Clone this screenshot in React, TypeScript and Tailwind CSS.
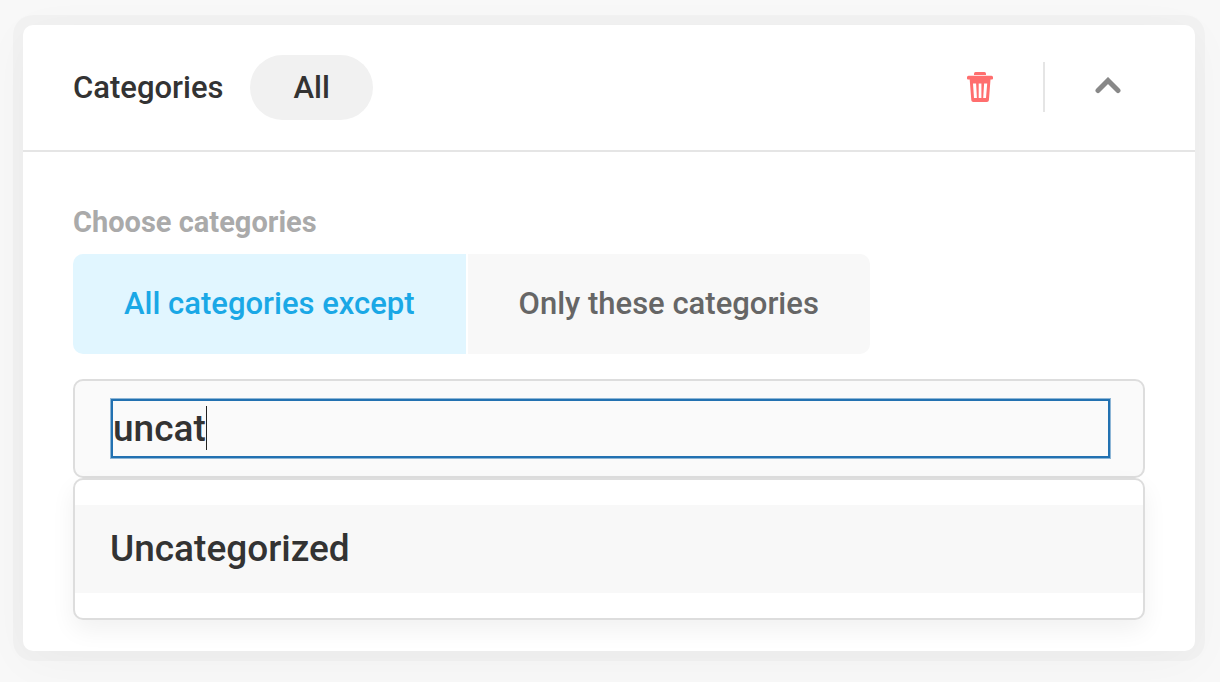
import { useState } from "react";

const MODES = [
  { id: "except", label: "All categories except" },
  { id: "only", label: "Only these categories" },
];

const CATEGORIES = ["Uncategorized"];

function TrashIcon() {
  return (
    <svg width="26" height="30" viewBox="0 0 26 30" fill="#ff6e6e" aria-hidden="true">
      <path d="M8.500 0h9a1.500 1.500 0 0 1 1.500 1.500V3H7V1.500A1.500 1.500 0 0 1 8.500 0Z" />
      <path
        fillRule="evenodd"
        d="M1.500 3.700h23a1.500 1.500 0 0 1 1.500 1.500V6.500a1 1 0 0 1-1 1h-1.500L21.900 28.200A2 2 0 0 1 19.900 30H6.300a2 2 0 0 1-2-1.800L2.700 7.500H1a1 1 0 0 1-1-1V5.200A1.500 1.500 0 0 1 1.500 3.700ZM6 11.500l1 14.500h2.900l-.8-14.500ZM11.700 11.500V26h2.700V11.500ZM17.100 11.500 16.200 26H19l1.200-14.500Z"
      />
    </svg>
  );
}

function ChevronUpIcon() {
  return (
    <svg width="26" height="17" viewBox="0 0 26 17" fill="none" aria-hidden="true">
      <path d="M3 13.500 13 3.500l10 10" stroke="#888888" strokeWidth="5" strokeLinecap="round" />
    </svg>
  );
}

export default function App() {
  const [mode, setMode] = useState("except");
  const [query, setQuery] = useState("uncat");
  const matches = CATEGORIES.filter((name) => name.toLowerCase().includes(query.toLowerCase()));

  return (
    <main className="min-h-screen bg-[#f8f8f8] pt-[25px] pr-[25px] pb-[31px] pl-[23px] font-['Roboto',sans-serif] font-medium text-[#333333]">
      <section className="rounded-[10px] bg-white shadow-[0_0_0_10px_rgba(0,0,0,0.024),0_10px_50px_rgba(0,0,0,0.035)]">
        <header className="flex items-start border-b-2 border-[#e5e5e5] px-[50px] py-[30px]">
          <div className="flex items-center gap-[27px] text-[31px] leading-[36px]">
            <h2>Categories</h2>
            <span className="flex h-[65px] items-center rounded-full bg-[#f1f1f1] px-[43px]">All</span>
          </div>
          <div className="ml-auto flex h-[64px] items-center">
            <button type="button" aria-label="Delete" className="px-[50px]">
              <TrashIcon />
            </button>
            <button
              type="button"
              aria-label="Collapse"
              className="flex h-[50px] items-center border-l-2 border-[#e5e5e5] pr-[24px] pb-[4px] pl-[50px]"
            >
              <ChevronUpIcon />
            </button>
          </div>
        </header>

        <div className="px-[50px] pt-[52px] pb-[31px]">
          <h3 className="text-[29px] leading-[36px] font-bold text-[#aaaaaa]">Choose categories</h3>
          <div className="mt-[14px] flex gap-[2px]">
            {MODES.map((item) => (
              <button
                key={item.id}
                type="button"
                aria-pressed={mode === item.id}
                onClick={() => setMode(item.id)}
                className={
                  mode === item.id
                    ? "h-[100px] bg-[#e1f6ff] px-[51px] text-[31px] text-[#1aa8e6] first:rounded-l-[10px] last:rounded-r-[10px]"
                    : "h-[100px] bg-[#f8f8f8] px-[51px] text-[31px] text-[#666666] first:rounded-l-[10px] last:rounded-r-[10px]"
                }
              >
                {item.label}
              </button>
            ))}
          </div>

          <div className="mt-[25px] rounded-[10px] border-2 border-[#dddddd] bg-[#fafafa] py-[18px] pr-[33px] pl-[36px]">
            <div className="relative text-[37px] leading-[44px]">
              <input
                type="text"
                aria-label="Search categories"
                autoFocus
                value={query}
                onChange={(event) => setQuery(event.target.value)}
                className="block h-[59px] w-full border-2 border-[#2271b1] bg-transparent caret-transparent ring-1 ring-[#2271b1]/50 outline-none"
              />
              <div
                aria-hidden="true"
                className="pointer-events-none absolute inset-0 flex items-start overflow-hidden pt-[7px] pl-[2px]"
              >
                <span
                  className="h-[44px] border-r border-[#222222] whitespace-pre text-transparent before:content-[attr(data-value)]"
                  data-value={query}
                />
              </div>
            </div>
          </div>
          <ul className="rounded-[10px] border-2 border-[#dddddd] bg-white py-[25px] shadow-[0_10px_25px_rgba(0,0,0,0.06)]">
            {matches.map((name) => (
              <li key={name}>
                <button
                  type="button"
                  className="block w-full bg-[#f8f8f8] px-[35px] py-[22px] text-left text-[37px] leading-[44px]"
                >
                  {name}
                </button>
              </li>
            ))}
          </ul>
        </div>
      </section>
    </main>
  );
}
